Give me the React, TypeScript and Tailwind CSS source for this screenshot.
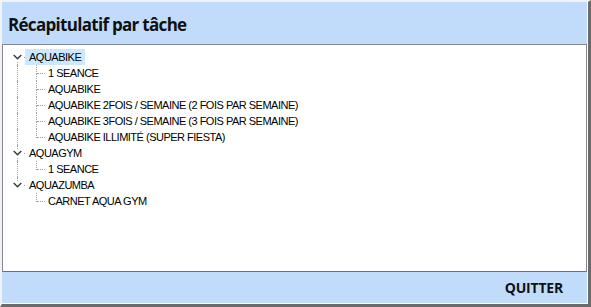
type Task = { name: string; children: string[] };

const tasks: Task[] = [
  {
    name: "AQUABIKE",
    children: [
      "1 SEANCE",
      "AQUABIKE",
      "AQUABIKE 2FOIS / SEMAINE (2 FOIS PAR SEMAINE)",
      "AQUABIKE 3FOIS / SEMAINE (3 FOIS PAR SEMAINE)",
      "AQUABIKE ILLIMITÉ (SUPER FIESTA)",
    ],
  },
  { name: "AQUAGYM", children: ["1 SEANCE"] },
  { name: "AQUAZUMBA", children: ["CARNET AQUA GYM"] },
];

const dotV = "border-l border-dotted border-[#a0a0a0]";
const dotH = "border-t border-dotted border-[#a0a0a0]";

function RootRow({ task, first, last, selected }: { task: Task; first: boolean; last: boolean; selected: boolean }) {
  return (
    <div className="flex h-4 items-stretch">
      {/* expander cell, line and chevron stacked in one grid cell */}
      <div className="grid w-[22px]">
        <div className="col-start-1 row-start-1 flex flex-col">
          <div className={`h-2 ml-[14px] ${first ? "" : dotV}`} />
          <div className={`h-2 ml-[14px] ${last ? "" : dotV}`} />
        </div>
        <div className="col-start-1 row-start-1 flex items-center">
          <div className={`ml-[18px] w-[4px] mt-[1px] ${dotH}`} />
        </div>
        <div className="col-start-1 row-start-1 flex items-center">
          <div className="ml-[9px] w-[11px] h-[9px] bg-white flex items-center justify-center">
            <svg width="9" height="6" viewBox="0 0 9 6" fill="none">
              <path d="M0.7 0.9 L4.5 4.7 L8.3 0.9" stroke="#3a3a3a" strokeWidth="1.4" />
            </svg>
          </div>
        </div>
      </div>
      <div className={`flex items-center px-[4px] ${selected ? "bg-[#cce8ff]" : ""}`}>{task.name}</div>
    </div>
  );
}

function ChildRow({ label, rootLast, last }: { label: string; rootLast: boolean; last: boolean }) {
  return (
    <div className="flex h-4 items-stretch">
      <div className="w-[22px] flex flex-col">
        <div className={`h-4 ml-[14px] ${rootLast ? "" : dotV}`} />
      </div>
      <div className="grid w-[23px]">
        <div className="col-start-1 row-start-1 flex flex-col">
          <div className={`h-[9px] ml-[11px] ${dotV}`} />
          <div className={`h-[7px] ml-[11px] ${last ? "" : dotV}`} />
        </div>
        <div className="col-start-1 row-start-1 flex items-center">
          <div className={`ml-[12px] w-[8px] mt-[1px] ${dotH}`} />
        </div>
      </div>
      <div className="flex items-center">{label}</div>
    </div>
  );
}

export default function App() {
  return (
    <div className="w-[591px] h-[307px] flex flex-col bg-white border-t-2 border-l-2 border-t-[#f2f2f2] border-l-[#f2f2f2] border-r-[3px] border-b-[3px] border-r-[#6b6b6b] border-b-[#6b6b6b] font-['Open_Sans',sans-serif]">
      <div className="flex flex-col flex-1 mr-px mb-px">
        <div className="h-[42px] bg-[#c1dbfa] flex items-center pl-[6px] pt-[4px]">
          <span className="text-[17px] font-bold text-[#111] tracking-[-0.7px]">Récapitulatif par tâche</span>
        </div>
        <div className="flex-1 bg-white border border-[#828790] border-b-[#6e6e6e] pt-[4px] font-['Liberation_Sans',Arial,sans-serif] text-[11px] tracking-[-0.5px] text-black leading-none">
          {tasks.map((t, i) => (
            <div key={t.name}>
              <RootRow task={t} first={i === 0} last={i === tasks.length - 1} selected={i === 0} />
              {t.children.map((c, j) => (
                <ChildRow key={c + j} label={c} rootLast={i === tasks.length - 1} last={j === t.children.length - 1} />
              ))}
            </div>
          ))}
        </div>
        <div className="h-[31px] bg-[#c1dbfa] flex items-center justify-end pr-[24px]">
          <span className="text-[14px] font-bold text-[#111] tracking-[-0.2px]">QUITTER</span>
        </div>
      </div>
    </div>
  );
}
